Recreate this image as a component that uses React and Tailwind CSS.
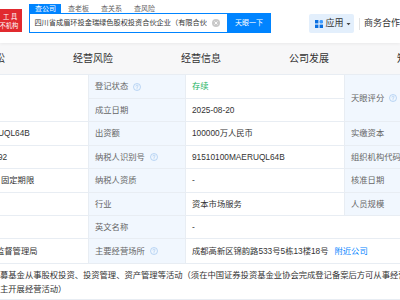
import React from "react";

const F = { fontFamily: '"Liberation Sans", "Noto Sans CJK SC", sans-serif' };

function Q() {
  return (
    <svg width="8" height="8" viewBox="0 0 16 16" className="ml-[5px] shrink-0">
      <circle cx="8" cy="8" r="7" fill="none" stroke="#9cc3ee" strokeWidth="1.3" />
      <path d="M5.9 6.2a2.1 2.1 0 1 1 3 1.9c-.6.3-.9.7-.9 1.3v.6" fill="none" stroke="#9cc3ee" strokeWidth="1.3" strokeLinecap="round" />
      <circle cx="8" cy="11.8" r="0.9" fill="#9cc3ee" />
    </svg>
  );
}

const base = "border-b border-r border-[#e8edf3] flex items-center overflow-hidden whitespace-nowrap text-[8.3px]";
const lab = base + " bg-[#f1f7fe] text-[#666] pl-[6px]";
const val = base + " bg-white text-[#333] pl-[6px]";
const green = base + " bg-white text-[#18b35f] pl-[6px]";
const left = base + " bg-white text-[#333]";

export default function App() {
  return (
    <div className="w-[400px] h-[300px] overflow-hidden bg-[#f7f7f8] relative" style={F}>
      {/* header */}
      <div className="h-[43px] bg-white flex items-start relative z-10 shadow-[0_1px_3px_rgba(0,0,0,0.06)]">
        <div className="mt-[9px] w-[23px] h-[23px] bg-[#e12a2f] flex flex-col items-end justify-center overflow-hidden text-white text-[6.3px] leading-[9px] pr-[5px]">
          <span className="whitespace-nowrap">工&nbsp;具</span>
          <span className="whitespace-nowrap mr-[-1px]">不机构</span>
        </div>
        <div className="ml-[7px] flex flex-col">
          <div className="mt-[4px] h-[9px] flex gap-[1px] text-[7px] leading-[9px]">
            <div className="w-[32px] bg-[#0084ff] text-white text-center">查公司</div>
            <div className="w-[32px] text-[#666] text-center">查老板</div>
            <div className="w-[32px] text-[#666] text-center">查关系</div>
            <div className="w-[32px] text-[#666] text-center">查风险</div>
          </div>
          <div className="w-[242px] h-[20px] border border-[#0084ff] flex items-stretch">
            <div className="flex-1 flex items-center pl-[4px] text-[7.2px] text-[#333] overflow-hidden whitespace-nowrap">
              <span className="w-[173px] overflow-hidden">四川省成眉环投金瑞绿色股权投资合伙企业（有限合伙</span>
              <span className="ml-[5px] w-[8px] h-[8px] rounded-full bg-[#c9c9c9] flex items-center justify-center">
                <svg width="6" height="6" viewBox="0 0 6 6"><path d="M1.5 1.5l3 3M4.5 1.5l-3 3" stroke="#fff" strokeWidth="0.9" /></svg>
              </span>
            </div>
            <div className="w-[43px] bg-[#0084ff] text-white text-[7px] flex items-center justify-center">天眼一下</div>
          </div>
        </div>
        <div className="ml-[38px] mt-[14px] w-[46px] h-[19px] bg-[#e3effc] rounded-[2px] flex items-center pl-[6px] text-[9px] text-[#333]">
          <svg width="8" height="8" viewBox="0 0 8 8" className="mr-[2px]">
            <rect x="0" y="0" width="3.4" height="3.4" fill="#0a6fe0" />
            <rect x="4.6" y="0" width="3.4" height="3.4" rx="1.2" fill="#3b9bff" />
            <rect x="0" y="4.6" width="3.4" height="3.4" fill="#0a6fe0" />
            <rect x="4.6" y="4.6" width="3.4" height="3.4" fill="#0a6fe0" />
          </svg>
          <span>应用</span>
          <svg width="5" height="4" viewBox="0 0 5 4" className="ml-[3px]"><path d="M0.5 1h4L2.5 3.3z" fill="#444" /></svg>
        </div>
        <div className="ml-[5px] mt-[18px] w-[1px] h-[12px] bg-[#e3e3e3]" />
        <div className="ml-[4px] mt-[14px] h-[19px] flex items-center text-[9px] text-[#333] whitespace-nowrap">商务合作</div>
      </div>

      {/* nav */}
      <div className="h-[30px] flex items-center ml-[-69px] text-[10px] text-[#333] whitespace-nowrap">
        <div className="w-[108px] shrink-0 text-center">法律诉讼</div>
        <div className="w-[108px] shrink-0 text-center">经营风险</div>
        <div className="w-[108px] shrink-0 text-center">经营信息</div>
        <div className="w-[108px] shrink-0 text-center">公司发展</div>
        <div className="w-[108px] shrink-0 text-center">知识产权</div>
      </div>

      {/* table */}
      <div className="mt-[1px] bg-white border-t border-[#e8edf3] grid grid-cols-[89px_97px_159px_80px] grid-rows-[24px_23px_24px_23px_24px_23px_23px_25px_36px] w-[425px]">
        <div className={left + " row-span-2"} />
        <div className={lab}>登记状态<Q /></div>
        <div className={green}>存续</div>
        <div className={lab + " row-span-2 pl-[4px]"}>天眼评分<Q /></div>

        <div className={lab}>成立日期</div>
        <div className={val}>2025-08-20</div>

        <div className={left}><span className="ml-[-2px]">UQL64B</span></div>
        <div className={lab}>出资额</div>
        <div className={val}>100000万人民币</div>
        <div className={lab + " pl-[4px]"}>实缴资本</div>

        <div className={left}><span className="ml-[-2px]">92</span></div>
        <div className={lab}>纳税人识别号<Q /></div>
        <div className={val}>91510100MAERUQL64B</div>
        <div className={lab + " pl-[4px]"}>组织机构代码</div>

        <div className={left}><span className="ml-[1px]">固定期限</span></div>
        <div className={lab}>纳税人资质</div>
        <div className={val}>-</div>
        <div className={lab + " pl-[4px]"}>核准日期</div>

        <div className={left} />
        <div className={lab}>行业</div>
        <div className={val}>资本市场服务</div>
        <div className={lab + " pl-[4px]"}>人员规模</div>

        <div className={left} />
        <div className={lab}>英文名称</div>
        <div className={val + " col-span-2"}>-</div>

        <div className={left}><span className="ml-[-4px]">监督管理局</span></div>
        <div className={lab}>主要经营场所<Q /></div>
        <div className={val + " col-span-2"}>
          成都高新区锦韵路533号5栋13楼18号
          <span className="ml-[6px] text-[#0084ff]">附近公司</span>
        </div>

        <div className="col-span-4 border-b border-[#e8edf3] bg-white text-[8.3px] text-[#333] leading-[14px] pt-[4px] whitespace-nowrap overflow-hidden">
          <div>募基金从事股权投资、投资管理、资产管理等活动（须在中国证券投资基金业协会完成登记备案后方可从事经营活动）</div>
          <div>主开展经营活动）</div>
        </div>
      </div>
    </div>
  );
}
